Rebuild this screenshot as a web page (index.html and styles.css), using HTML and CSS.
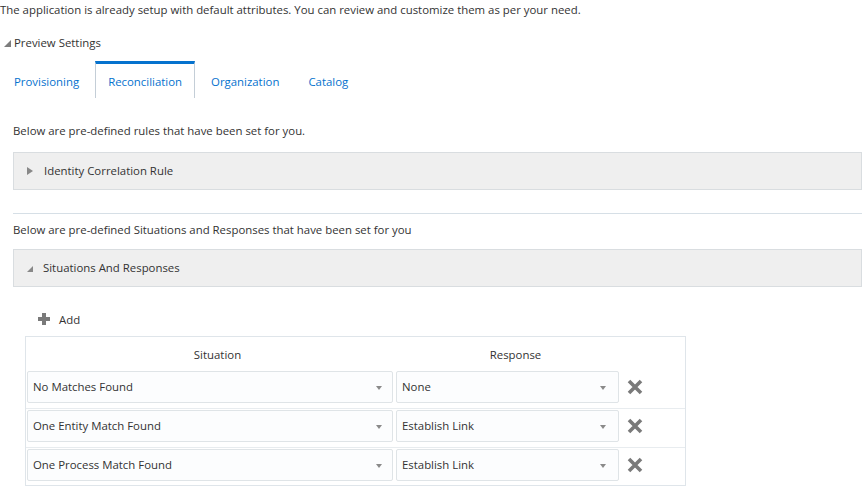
FILE: index.html
```html
<!DOCTYPE html>
<html>
<head>
<meta charset="utf-8">
<link rel="stylesheet" href="styles.css">
</head>
<body>
<div class="intro">The application is already setup with default attributes. You can review and customize them as per your need.</div>
<div class="disclosure"><span class="tri-open"></span>Preview Settings</div>
<div class="tabs">
  <div class="tab">Provisioning</div>
  <div class="tab active">Reconciliation</div>
  <div class="tab">Organization</div>
  <div class="tab">Catalog</div>
</div>
<div class="content">
  <div class="note first">Below are pre-defined rules that have been set for you.</div>
  <div class="panel"><span class="tri-closed"></span>Identity Correlation Rule</div>
  <div class="divider"></div>
  <div class="note second">Below are pre-defined Situations and Responses that have been set for you</div>
  <div class="panel"><span class="tri-open"></span>Situations And Responses</div>
  <div class="add">
    <svg class="plus" width="12" height="12" viewBox="0 0 12 12"><path d="M4 0h4v4h4v4H8v4H4V8H0V4h4z" fill="#7a7a7a"/></svg>
    <span>Add</span>
  </div>
  <div class="table">
    <div class="thead">
      <div class="th">Situation</div>
      <div class="th">Response</div>
      <div></div>
    </div>
    <div class="row">
      <div class="select wide">No Matches Found<span class="arrow"></span></div>
      <div class="select narrow">None<span class="arrow"></span></div>
      <div class="del"><svg width="16" height="16" viewBox="0 0 16 16"><path d="M2 2L14 14M14 2L2 14" stroke="#7a7a7a" stroke-width="3.6"/></svg></div>
    </div>
    <div class="row">
      <div class="select wide">One Entity Match Found<span class="arrow"></span></div>
      <div class="select narrow">Establish Link<span class="arrow"></span></div>
      <div class="del"><svg width="16" height="16" viewBox="0 0 16 16"><path d="M2 2L14 14M14 2L2 14" stroke="#7a7a7a" stroke-width="3.6"/></svg></div>
    </div>
    <div class="row last">
      <div class="select wide">One Process Match Found<span class="arrow"></span></div>
      <div class="select narrow">Establish Link<span class="arrow"></span></div>
      <div class="del"><svg width="16" height="16" viewBox="0 0 16 16"><path d="M2 2L14 14M14 2L2 14" stroke="#7a7a7a" stroke-width="3.6"/></svg></div>
    </div>
  </div>
</div>
</body>
</html>
```
FILE: styles.css
```css
html, body {
  margin: 0;
  padding: 0;
  background: #fff;
}
body {
  font-family: "Open Sans", "Noto Sans", "Liberation Sans", sans-serif;
  font-size: 11.4px;
  color: #333;
  width: 867px;
  height: 492px;
  overflow: hidden;
}
.intro {
  height: 20px;
  line-height: 20px;
}
.disclosure {
  margin-top: 15px;
  height: 16px;
  line-height: 16px;
  padding-left: 4px;
  display: flex;
  align-items: center;
}
.tri-open {
  display: inline-block;
  width: 0;
  height: 0;
  border-left: 7px solid transparent;
  border-bottom: 7px solid #7d7d7d;
  margin-right: 3px;
  margin-top: 1px;
}
.tri-closed {
  display: inline-block;
  width: 0;
  height: 0;
  border-top: 4.5px solid transparent;
  border-bottom: 4.5px solid transparent;
  border-left: 6px solid #888;
  margin-right: 11px;
}
.tabs {
  margin-top: 10px;
  display: flex;
  height: 37px;
  padding-left: 1px;
}
.tab {
  box-sizing: border-box;
  height: 37px;
  padding: 0 12px;
  line-height: 35px;
  color: #0572ce;
  border: 1px solid transparent;
  border-top: 3px solid transparent;
  border-bottom: none;
  margin-right: 3px;
}
.tab.active {
  border-color: #c4ced7;
  border-top-color: #0572ce;
}
.content {
  padding: 0 5px 0 13px;
}
.note {
  height: 16px;
  line-height: 16px;
}
.note.first {
  margin-top: 25px;
}
.panel {
  box-sizing: border-box;
  margin-top: 13px;
  height: 38px;
  background: #efefef;
  border: 1px solid #d9dde0;
  display: flex;
  align-items: center;
  padding-left: 13px;
  padding-bottom: 1px;
}
.panel .tri-open {
  margin-right: 10px;
  margin-top: 2px;
  border-bottom-color: #888;
  border-left-width: 6px;
  border-bottom-width: 6px;
}
.divider {
  margin-top: 23px;
  height: 1px;
  background: #d6dfe6;
}
.note.second {
  margin-top: 8px;
}
.note.second + .panel {
  margin-top: 11px;
}
.add {
  margin-top: 24px;
  height: 16px;
  display: flex;
  align-items: center;
  padding-left: 25px;
}
.plus {
  margin-right: 9px;
}
.table {
  margin-top: 9px;
  margin-left: 12px;
  width: 661px;
  box-sizing: border-box;
  border: 1px solid #dfe5ea;
}
.thead, .row {
  display: grid;
  grid-template-columns: 370px 226px 1fr;
}
.thead {
  height: 33px;
  align-items: center;
}
.th {
  text-align: center;
  padding-left: 13px;
  padding-top: 1px;
}
.row {
  padding: 1px 0 5px;
  border-bottom: 1px solid #e8ecef;
  align-items: center;
}
.row.last {
  border-bottom: none;
  padding-bottom: 4px;
}
.select {
  position: relative;
  box-sizing: border-box;
  height: 32px;
  line-height: 30px;
  background: #fcfdfe;
  border: 1px solid #dfe4e7;
  border-radius: 2px;
  padding-left: 5px;
}
.select.wide {
  margin-left: 1px;
  width: 366px;
}
.select.narrow {
  width: 223px;
}
.arrow {
  position: absolute;
  right: 10px;
  top: 14px;
  width: 0;
  height: 0;
  border-left: 3px solid transparent;
  border-right: 3px solid transparent;
  border-top: 4px solid #8a8a8a;
}
.select.narrow .arrow {
  right: 12px;
}
.del {
  padding-left: 5px;
  display: flex;
  align-items: center;
}
.del svg {
  display: block;
}
```
